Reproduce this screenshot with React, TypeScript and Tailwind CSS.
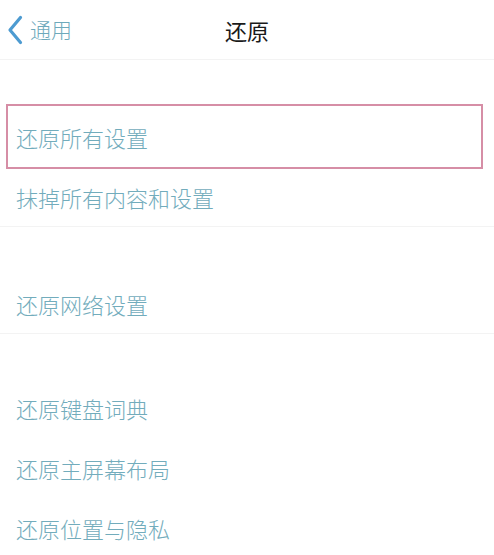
import { ReactNode } from "react";

const font = { fontFamily: '"Noto Sans CJK SC", "Noto Sans", sans-serif' };

function Row({ children, last, highlight }: { children: ReactNode; last?: boolean; highlight?: boolean }) {
  return (
    <div
      className={
        "relative flex h-[60px] items-center pl-4 text-[22px] font-light text-[#72acbc] " +
        (last ? "border-b border-[#f3f3f3]" : "")
      }
    >
      <span className="leading-none">{children}</span>
      {highlight && (
        <span className="pointer-events-none absolute left-[6px] right-[11px] top-[-3px] bottom-[-2px] border-2 border-[#d68ea6]" />
      )}
    </div>
  );
}

export default function App() {
  return (
    <div className="h-[555px] w-[494px] overflow-hidden bg-white" style={font}>
      <div className="grid h-[60px] grid-cols-[1fr_auto_1fr] items-center border-b border-[#f3f3f3]">
        <div className="flex items-center gap-[7px] pl-[7px]">
          <svg width="16" height="30" viewBox="0 0 16 30" fill="none">
            <path d="M13.5 2.5 L3 15 L13.5 27.5" stroke="#4d9bd1" strokeWidth="3.2" strokeLinecap="round" strokeLinejoin="round" />
          </svg>
          <span className="text-[21px] font-light leading-none text-[#6ea9bb]">通用</span>
        </div>
        <div className="text-[22px] leading-none text-[#1a1a1a]">还原</div>
        <div />
      </div>

      <div className="h-[47px]" />
      <Row highlight>还原所有设置</Row>
      <Row last>抹掉所有内容和设置</Row>

      <div className="h-[47px]" />
      <Row last>还原网络设置</Row>

      <div className="h-[44px]" />
      <Row>还原键盘词典</Row>
      <Row>还原主屏幕布局</Row>
      <Row>还原位置与隐私</Row>
    </div>
  );
}
